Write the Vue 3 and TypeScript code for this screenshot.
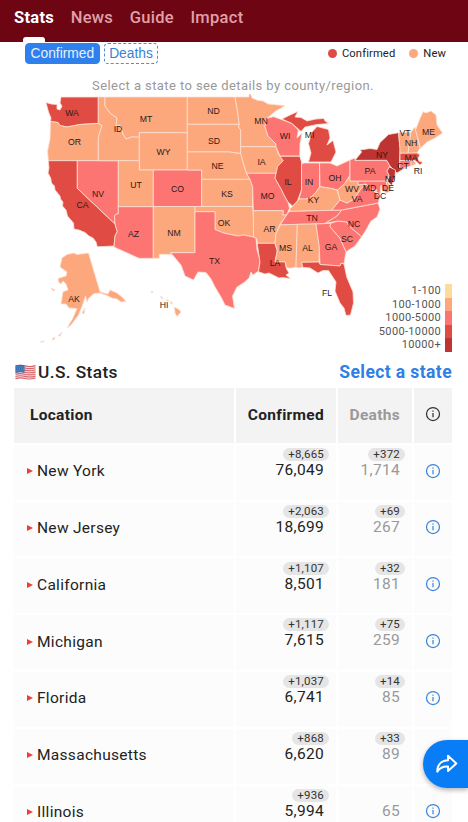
<script setup lang="ts">
  import { ref } from 'vue'

  type Level = 'low' | 'mid' | 'high' | 'top'

  interface State {
    id: string
    level: Level
    d: string
    x: number
    y: number
  }

  interface Row {
    name: string
    confirmed: string
    newConfirmed: string
    deaths: string
    newDeaths?: string
  }

  const tabs = ['Stats', 'News', 'Guide', 'Impact']
  const activeTab = ref<string>('Stats')
  const metric = ref<string>('Confirmed')

  // x, y is the centre of the label
  const states: State[] = [
    { id: 'WA', level: 'high', x: 72, y: 112.5, d: 'M46 102.5L51 104 57 104.5 57 109 60 110 62 106 60 103 61 97H98.3V123.4L87 124 80 124.5 67 127 60 125.5 58 122.5 50.5 121.5 51 118 48.5 112Z' },
    { id: 'OR', level: 'low', x: 74.5, y: 141.5, d: 'M50.5 121.5L58 122.5 60 125.5 67 127 80 124.5 98.3 123.4 102 125.5 99 135 98.3 140V160.7H48.3L47.6 151 50 139Z' },
    { id: 'CA', level: 'high', x: 82.5, y: 204.5, d: 'M48.3 160.7H77.3V188.3L115 224 117.3 231.7 115 236 114 246 97.3 246.8 96 242 93 238 89 236 85 232.5 79 230 74 229 73.5 223 67.5 216 66 210 62.5 206 63 202 60.5 199 60 196 55 190 54.5 186 51.5 183 50.7 178 48 173 49 168Z' },
    { id: 'NV', level: 'mid', x: 98, y: 193.5, d: 'M77.3 160.7H118.3V214L116 214 114.5 216 115 224 77.3 188.3Z' },
    { id: 'ID', level: 'low', x: 118, y: 129, d: 'M98.3 97H105V106L110 113 117 118 116 126 120 125 123 134 126 139 132 136.7 139.3 137V160.7H98.3V140L99 135 102 125.5 98.3 123.4Z' },
    { id: 'MT', level: 'low', x: 146, y: 118.5, d: 'M105 97H187.3V132.7H139.3V137L132 136.7 126 139 123 134 120 125 116 126 117 118 110 113 105 106Z' },
    { id: 'WY', level: 'low', x: 163.5, y: 151.5, d: 'M139.3 132.7H187.3V170H139.3Z' },
    { id: 'UT', level: 'low', x: 136, y: 184.5, d: 'M118.3 160.7H139.3V170H153.3V206.7H118.3Z' },
    { id: 'AZ', level: 'mid', x: 133.5, y: 233.5, d: 'M118.3 206.7H153.3V258.3H139L114 247 115 236 117.3 231.7 115 224 114.5 216 116 214 118.3 214Z' },
    { id: 'CO', level: 'mid', x: 177.5, y: 188.5, d: 'M153.3 170H201.7V206.5H153.3Z' },
    { id: 'NM', level: 'low', x: 174, y: 233, d: 'M153.3 206.5H195V252.7H170.7L172 254.3H159.3V258.3H153.3Z' },
    { id: 'ND', level: 'low', x: 213.5, y: 111, d: 'M187.3 97H235L237.3 110 239.3 124.3H187.3Z' },
    { id: 'SD', level: 'low', x: 214, y: 141, d: 'M187.3 124.3H239.3L238.5 127 240.7 130V153.5L236 153 230 152H187.3Z' },
    { id: 'NE', level: 'low', x: 217.5, y: 165.5, d: 'M187.3 152H230L236 153 240.7 153.5 243.3 163 246.7 174 250 179.3H201.7V170H187.3Z' },
    { id: 'KS', level: 'low', x: 227, y: 193.5, d: 'M201.7 179.3H250L252.7 186.7V206.5H201.7Z' },
    { id: 'OK', level: 'low', x: 224, y: 223, d: 'M195 206.5H252.7L253.5 219V237L243.5 235 238 236 233 235 223.5 233 215 229.5V211.7H195Z' },
    { id: 'TX', level: 'mid', x: 214.5, y: 261, d: 'M195 211.7H215V229.5L223.5 233 233 235 238 236 243.5 235 253.5 237 256 238.3 257 250 260 260 258.5 271 253 275 251 272 249 278 244 282.5 237 287 232.5 296 234.5 308.5 225 305 221 297 215 287 211 279 206 272.5 198 272 193.5 280 185 276 181 265 170.7 252.7H195Z' },
    { id: 'MN', level: 'low', x: 261, y: 121, d: 'M235 97H249V94L250.5 94 252 98 258 100.5 263 101 268 104 285 105.7 275 111.5 267 118.3 265 126.7 268 136 276 144V146.7H240.7V130L238.5 127 239.3 124.3 237.3 110Z' },
    { id: 'IA', level: 'low', x: 261.5, y: 161.5, d: 'M240.7 146.7H276L278.3 154 283.3 160.7 277.5 166.7 276 173.3H246.5L243.3 163 240.7 153.5Z' },
    { id: 'MO', level: 'mid', x: 267.5, y: 195.5, d: 'M246.5 173.3H276L275 178.3 281.7 190 284 195 288 202 289.5 208.3 286.7 215H282.7L283.3 210.7H253.3L252.7 186.7 250 179.3Z' },
    { id: 'AR', level: 'low', x: 269.5, y: 228.5, d: 'M253.3 210.7H283.3L282.7 215H286.7L280 224 276 234 275 243.3H257.7L256.5 238.5 253.5 237Z' },
    { id: 'LA', level: 'high', x: 275, y: 263, d: 'M257.2 243.3H275L277.3 251 275 261.7H285L286.5 269 289 273 286 275 290.5 278.5 282 277.5 279 278 273 275 269 273 265 274 258.5 271.7 260 262Z' },
    { id: 'WI', level: 'mid', x: 285, y: 135.5, d: 'M267 118.3L273.5 116.7 280 119 291.7 123.3 298.3 130 297 138 302 133 300 144 299.8 156H280L276 146.7V144L268 136 265 126.7Z' },
    { id: 'IL', level: 'high', x: 288, y: 181.5, d: 'M280 156.3H299.8L301.5 162V190L297 202 292.5 206 288 202 284 195 281.7 190 275 178.3 277.5 166.7 283.3 160.7Z' },
    { id: 'MI', level: 'high', x: 309.5, y: 134.5, d: 'M282 119L290 115 298 111.5 295 117 301 117.5 307 121 316 119 324 118.5 325 121 329 123.5 317 124.5 310 126 305 127 301 131.5 298.3 129 291.7 123.3ZM317 126.5L328.5 129.5 330 138 327 145 333 140.5 336 152 333 158 331 162H308.5L311 153 308.5 143.5 312 132Z' },
    { id: 'IN', level: 'mid', x: 309, y: 182, d: 'M301.5 164L304 163 319.5 163V186.7L317 191 311.7 196.7 306 199 299 199 301.5 190Z' },
    { id: 'OH', level: 'mid', x: 335, y: 177.5, d: 'M319.5 163H330L337 166 350 160V175L345 183.3 338 190 330 188.3 320 186.7Z' },
    { id: 'KY', level: 'low', x: 313.5, y: 199.5, d: 'M290 208.3L293 206 299 199 306 199 311.7 196.7 317 191 320 186.7 330 188.3 337 190 340 200 331.7 210.3 290 211.5Z' },
    { id: 'TN', level: 'mid', x: 312, y: 217.5, d: 'M289.3 211.5L341.7 210 337 216 325 223.5 280 225 286.7 215Z' },
    { id: 'MS', level: 'low', x: 285.5, y: 247.5, d: 'M280 225L297.3 224.3 296 267.3 289.3 268.3 286.5 267 285 261.7H275L277.3 251 275 243.3 276 234Z' },
    { id: 'AL', level: 'low', x: 307.5, y: 247.5, d: 'M297.3 224.3L316 224 319.3 246.7 319 262 301.7 262.3 302.7 267 299 268 296 267.3Z' },
    { id: 'GA', level: 'mid', x: 331, y: 246.5, d: 'M316 224L330.7 223.3 330 226.7 340 238.3 346 251.7 344 263.5 341 263.3 340 266 320 264.5 319.3 246.7Z' },
    { id: 'FL', level: 'high', x: 327, y: 292.5, d: 'M301.7 262.3L319 262 320 264.5 340 266 341 263.3 344 264 346.7 277 353 292 353.5 303 350.5 315 346 315.5 344 308 340 303 335 291 336 282 328.5 270.5 323 270.5 318 273 310 268 302.7 267.3Z' },
    { id: 'SC', level: 'mid', x: 347, y: 238.5, d: 'M330.7 223.3L338 221 347 222 349 226 361.7 236.7 355 246 346 251.7 340 238.3 330 226.7Z' },
    { id: 'NC', level: 'mid', x: 354, y: 223.5, d: 'M341.7 210L378 203 380 209 377 217 371 221 366 230 361.7 236.7 349 226 347 222 338 221 325 223.5 337 216Z' },
    { id: 'VA', level: 'mid', x: 357, y: 198.5, d: 'M331.7 210.3L340 200 347 203 354 199 360 190 366 184 373 190 380 197 378 203 341.7 210Z' },
    { id: 'WV', level: 'low', x: 352, y: 189, d: 'M337.5 190L345 183.3 350 176V181H358V185L366 183 360 190 354 199 347 203 340 200Z' },
    { id: 'MD', level: 'mid', x: 369.5, y: 188, d: 'M358 181H386L388 189 391 190 387 193 382 190 381 185 380 194 373 190 366 184 358 185Z' },
    { id: 'DE', level: 'low', x: 388, y: 188, d: 'M386 181L388 182 391.5 190H388Z' },
    { id: 'DC', level: 'low', x: 380, y: 196, d: 'M375 189L377 190 376 192Z' },
    { id: 'PA', level: 'mid', x: 370, y: 171, d: 'M350 160L355 158 355 160.3H386.7L390 166 387 171 389.3 176 386 181H350Z' },
    { id: 'NY', level: 'top', x: 382, y: 154.5, d: 'M355 160.3L361.7 152 360 150 370 148.5 377 149.5 380 142.5 388.5 134.5 398.5 132.7 400 148.3 399.5 168 406 167.5 397 173 390 166 386.7 160.3Z' },
    { id: 'NJ', level: 'top', x: 390, y: 179, d: 'M389.5 167L395.5 170 395 177 391.7 185.5 387.5 181.5 389.3 176 387 171Z' },
    { id: 'VT', level: 'low', x: 405, y: 132.5, d: 'M398.5 132.7L411 132 408 153.3H400V148.3Z' },
    { id: 'NH', level: 'low', x: 411, y: 143, d: 'M411 132L415 127 420 148 417 153 408 153.3Z' },
    { id: 'ME', level: 'low', x: 428.5, y: 131.5, d: 'M415.5 130L420 118.5 423 111.7 426 113 431 111 436 115 437 125 442.5 133 435 138 427 142 420.5 148Z' },
    { id: 'MA', level: 'high', x: 411, y: 157.5, d: 'M400 153.3L417 153 420 155 418 158 419 161 423 162.5 420 165 415 160.5H400Z' },
    { id: 'CT', level: 'mid', x: 403, y: 165.5, d: 'M400 160.5H411V166L399.5 169Z' },
    { id: 'RI', level: 'low', x: 418, y: 170.5, d: 'M411 160.5H414L416 164 411 166Z' },
    { id: 'AK', level: 'low', x: 74, y: 298.5, d: 'M67 254.5L74 253 77 254.5 88.5 253 100 291.7 104 293 108 294 110 290 117 293 122 297 126 301.5 121 302 117 299 112 298 107 295.5 100 293 94 293.5 88.5 298.5 87 302 85.5 296 82.5 305 78.5 315 71 325 67 328 73 318 77 308.5 69 308 66 304 61 304 63 291.7 68 290 66 284 63 281 61 284 58.5 282 58 278.5 66 276 67 272 60 267 62 258ZM51 288L55 290 53 291ZM58 336L62 332 60 336ZM52 339L55 337 54 340ZM40 342L44 341 44 342ZM82 313L85 308 84 314Z' },
    { id: 'HI', level: 'low', x: 164, y: 304.5, d: 'M151 291L153 291.5 152 293ZM160.5 296L163.5 298.5 161.5 298.5ZM166 300L169 300 168 301ZM170 301.5L173 303 171 304ZM174.5 307L179 309.5 181 312 177 316.5 175 313Z' },
  ]

  const scale = [
    { label: '1-100', level: 'least' },
    { label: '100-1000', level: 'low' },
    { label: '1000-5000', level: 'mid' },
    { label: '5000-10000', level: 'high' },
    { label: '10000+', level: 'top' },
  ]

  const rows: Row[] = [
    { name: 'New York', confirmed: '76,049', newConfirmed: '+8,665', deaths: '1,714', newDeaths: '+372' },
    { name: 'New Jersey', confirmed: '18,699', newConfirmed: '+2,063', deaths: '267', newDeaths: '+69' },
    { name: 'California', confirmed: '8,501', newConfirmed: '+1,107', deaths: '181', newDeaths: '+32' },
    { name: 'Michigan', confirmed: '7,615', newConfirmed: '+1,117', deaths: '259', newDeaths: '+75' },
    { name: 'Florida', confirmed: '6,741', newConfirmed: '+1,037', deaths: '85', newDeaths: '+14' },
    { name: 'Massachusetts', confirmed: '6,620', newConfirmed: '+868', deaths: '89', newDeaths: '+33' },
    { name: 'Illinois', confirmed: '5,994', newConfirmed: '+936', deaths: '65' },
  ]
</script>

<template>
  <div class="page">
    <nav class="tabs">
      <a v-for="tab in tabs" :key="tab" :class="{ active: activeTab === tab }" @click="activeTab = tab">{{ tab }}</a>
    </nav>

    <div class="controls">
      <button
        v-for="name in ['Confirmed', 'Deaths']"
        :key="name"
        :class="{ selected: metric === name }"
        type="button"
        @click="metric = name"
      >{{ name }}</button>
      <div class="legend">
        <span class="key high">Confirmed</span>
        <span class="key low">New</span>
      </div>
    </div>

    <p class="hint">Select a state to see details by county/region.</p>

    <div class="map">
      <svg viewBox="0 93 468 259" width="468" height="259">
        <path v-for="s in states" :key="s.id" :class="['state', s.level]" :d="s.d" />
        <text v-for="s in states" :key="s.id" :x="s.x" :y="s.y + 3.1">{{ s.id }}</text>
      </svg>
      <ul class="scale">
        <li v-for="item in scale" :key="item.label" :class="item.level">{{ item.label }}</li>
      </ul>
    </div>

    <div class="title">
      <svg class="flag" viewBox="0 0 21 16" width="21" height="16">
        <path fill="#f3e4e4" d="M.5 1.5Q5 0 10 1.3T20.5 1V14Q16 15.5 11 14.4T.5 15Z" />
        <path
          fill="none"
          stroke="#d9636b"
          stroke-width="1.1"
          d="M.5 2Q5 .6 10 1.9T20.5 1.6M.5 4.1Q5 2.7 10 4T20.5 3.7M.5 6.2Q5 4.8 10 6.1T20.5 5.8M.5 8.3Q5 6.9 10 8.2T20.5 7.9M.5 10.4Q5 9 10 10.3T20.5 10M.5 12.5Q5 11.1 10 12.4T20.5 12.1M.5 14.6Q5 13.2 10 14.5T20.5 14"
        />
        <path fill="#356fb2" d="M.5 1.5Q5 0 9.5 1.3V8.7Q5 7.7.5 9Z" />
        <path stroke="#a9c4e4" stroke-width=".7" stroke-dasharray=".8 1.2" d="M1.5 3H9M2 5H9M1.5 7H9" />
      </svg>
      <h2>U.S. Stats</h2>
      <a>Select a state</a>
    </div>

    <div class="table">
      <div class="row head">
        <div class="cell">Location</div>
        <div class="cell num">Confirmed</div>
        <div class="cell num muted">Deaths</div>
        <div class="cell info">
          <svg viewBox="0 0 16 16" width="16" height="16"><circle cx="8" cy="8" r="6.5" /><path d="M8 7V11.3M8 4.5V5.8" /></svg>
        </div>
      </div>
      <div v-for="row in rows" :key="row.name" class="row">
        <div class="cell">
          <svg class="arrow" viewBox="0 0 6 6" width="6" height="6"><path d="M0 0L6 3 0 6Z" /></svg>{{ row.name }}
        </div>
        <div class="cell num"><span class="badge">{{ row.newConfirmed }}</span>{{ row.confirmed }}</div>
        <div class="cell num muted"><span v-if="row.newDeaths" class="badge">{{ row.newDeaths }}</span>{{ row.deaths }}</div>
        <div class="cell info">
          <svg viewBox="0 0 16 16" width="16" height="16"><circle cx="8" cy="8" r="6.5" /><path d="M8 7V11.3M8 4.5V5.8" /></svg>
        </div>
      </div>
    </div>

    <button class="share" type="button" aria-label="Share">
      <svg viewBox="0 0 24 22" width="24" height="22">
        <path d="M13 2.8L21.3 10.4 13 18V13.6C8 13.2 5 14.8 2.3 18.6 2.2 11.5 6.5 7.6 13 7.2Z" />
      </svg>
    </button>
  </div>
</template>

<style>
  body {
    margin: 0;
    background: #fff;
    overflow: hidden;
  }
</style>

<style scoped>
  .page {
    position: relative;
    width: 468px;
    height: 822px;
    overflow: hidden;
    font-family: Roboto, sans-serif;
    color: #222;
  }

  .tabs {
    display: flex;
    gap: 16.5px;
    box-sizing: border-box;
    height: 41.5px;
    padding: 0 14px;
    background: #6d0612;
    line-height: 35px;
    font-size: 16.5px;
    font-weight: 500;
    letter-spacing: 0.3px;
    color: #e0a0ab;
  }

  .tabs a {
    display: flex;
    flex-direction: column;
    justify-content: space-between;
    align-items: center;
  }

  .tabs .active {
    font-weight: 700;
    color: #fff;
  }

  .tabs .active::after {
    content: '';
    width: 22px;
    height: 4.5px;
    border-radius: 3px 3px 0 0;
    background: #fff;
  }

  .controls {
    display: flex;
    align-items: center;
    gap: 4px;
    height: 22px;
    padding: 1px 22px 0 25px;
  }

  .controls button {
    box-sizing: border-box;
    height: 21px;
    margin: 0;
    padding: 0 4.5px;
    border: 1.5px dashed #4a90d9;
    border-radius: 4px;
    background: #fff;
    font: 13.8px/17px "Liberation Sans", sans-serif;
    color: #3b82d6;
  }

  .controls .selected {
    border: 1px solid #2f80ed;
    background: #2f80ed;
    color: #e6f0ff;
  }

  .legend {
    display: flex;
    gap: 14px;
    margin-left: auto;
    font-size: 11.2px;
    letter-spacing: 0.12px;
  }

  .key {
    display: flex;
    align-items: center;
    gap: 5px;
  }

  .key::before {
    content: '';
    width: 9px;
    height: 9px;
    border-radius: 50%;
  }

  .key.high::before {
    background: #e04b43;
  }

  .key.low::before {
    background: #fca77c;
  }

  .hint {
    margin: 12px 0 0;
    height: 16.5px;
    line-height: 18px;
    font-size: 13px;
    letter-spacing: 0.41px;
    text-align: center;
    text-indent: -2px;
    color: #999;
  }

  .map {
    display: grid;
    height: 259px;
  }

  .map > * {
    grid-area: 1 / 1;
  }

  .state {
    stroke: #fbe0d3;
    stroke-width: 0.8;
    stroke-linejoin: round;
  }

  .state.low {
    fill: #fca77c;
  }

  .state.mid {
    fill: #fd7572;
  }

  .state.high {
    fill: #e04b43;
  }

  .state.top {
    fill: #bd3432;
  }

  .map text {
    font: 8.7px "Liberation Sans", sans-serif;
    text-anchor: middle;
    fill: #2c1b18;
  }

  .scale {
    align-self: end;
    justify-self: end;
    margin: 0 16px 0 0;
    padding: 0;
    list-style: none;
    font-size: 11px;
    line-height: 13.6px;
    letter-spacing: 0.35px;
    text-align: right;
    color: #555;
  }

  .scale li {
    padding-right: 4px;
    border-right: 7px solid;
  }

  .scale .least {
    border-color: #fddb9b;
  }

  .scale .low {
    border-color: #fca77c;
  }

  .scale .mid {
    border-color: #fd7572;
  }

  .scale .high {
    border-color: #e04b43;
  }

  .scale .top {
    border-color: #bd3432;
  }

  .title {
    display: flex;
    align-items: center;
    height: 36px;
    padding: 4px 16px 0 15px;
    box-sizing: border-box;
    font-size: 17.5px;
  }

  .flag {
    margin-right: 2px;
  }

  h2 {
    margin: 0;
    font-size: 17.3px;
    font-weight: 500;
    letter-spacing: 0.4px;
  }

  .title a {
    margin-left: auto;
    font-weight: 700;
    letter-spacing: 0.4px;
    color: #2f80e4;
  }

  .table {
    display: flex;
    flex-direction: column;
    gap: 2px;
    padding: 0 16px 0 14px;
  }

  .row {
    display: grid;
    grid-template-columns: 219.5px 100px 74px 38.5px;
    gap: 2px;
    height: 54.8px;
  }

  .cell {
    display: flex;
    align-items: center;
    box-sizing: border-box;
    padding: 0 0 2px 13px;
    background: #fcfcfc;
    font-size: 15.5px;
    letter-spacing: 0.3px;
  }

  .head .cell {
    padding: 0 0 0 16px;
    background: #f3f3f3;
    font-size: 15.5px;
    font-weight: 700;
  }

  .arrow {
    margin-right: 4px;
    fill: #ee3f36;
  }

  .cell.num {
    flex-direction: column;
    align-items: flex-end;
    justify-content: flex-end;
    padding: 0 11.5px 19px 0;
    line-height: 19.5px;
  }

  .head .cell.num {
    justify-content: center;
    padding: 0 11.5px 0 0;
  }

  .muted {
    color: #999;
  }

  .badge {
    margin-right: -5px;
    padding: 0 5px;
    border-radius: 7px;
    background: #e5e5e5;
    font-size: 11.5px;
    line-height: 13px;
    letter-spacing: 0.2px;
    color: #333;
  }

  .cell.info {
    justify-content: center;
    padding: 0 0 3px;
    fill: none;
    stroke: #3b86dc;
    stroke-width: 1.25;
  }

  .head .cell.info {
    padding: 0 0 3px;
    stroke: #333;
  }

  /* share button hangs over the table */
  .share {
    position: absolute;
    right: 0;
    bottom: 34px;
    width: 45px;
    height: 48px;
    padding: 0 0 0 12px;
    border: none;
    border-radius: 24px 0 0 24px;
    background: #087df5;
    box-shadow: 0 2px 5px rgba(0, 0, 0, 0.3);
    text-align: left;
  }

  .share svg {
    display: block;
    fill: none;
    stroke: #fff;
    stroke-width: 2;
    stroke-linejoin: round;
  }
</style>
